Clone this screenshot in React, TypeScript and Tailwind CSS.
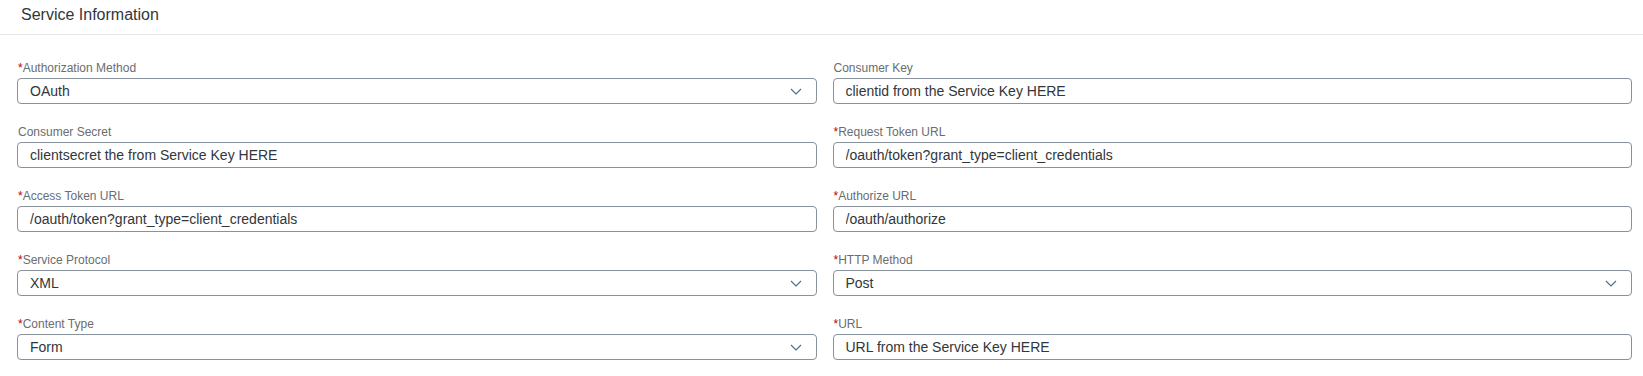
import React from 'react'

type Field = {
  label: string
  value: string
  required?: boolean
  select?: boolean
}

const fields: Field[] = [
  { label: 'Authorization Method', value: 'OAuth', required: true, select: true },
  { label: 'Consumer Key', value: 'clientid from the Service Key HERE' },
  { label: 'Consumer Secret', value: 'clientsecret the from Service Key HERE' },
  { label: 'Request Token URL', value: '/oauth/token?grant_type=client_credentials', required: true },
  { label: 'Access Token URL', value: '/oauth/token?grant_type=client_credentials', required: true },
  { label: 'Authorize URL', value: '/oauth/authorize', required: true },
  { label: 'Service Protocol', value: 'XML', required: true, select: true },
  { label: 'HTTP Method', value: 'Post', required: true, select: true },
  { label: 'Content Type', value: 'Form', required: true, select: true },
  { label: 'URL', value: 'URL from the Service Key HERE', required: true },
]

const Chevron = () => (
  <svg width="12" height="7" viewBox="0 0 12 7" fill="none" className="shrink-0">
    <path d="M1 1l5 5 5-5" stroke="#4a6a8e" strokeWidth="1.1" />
  </svg>
)

const FormField = ({ field }: { field: Field }) => {
  return (
    <div className="flex flex-col">
      <label className="h-4 text-[12px] leading-4 text-[#6a6d70] pl-px">
        {field.required && <span className="text-[#bb0000]">*</span>}
        {field.label}
      </label>
      <div className="mt-[2px] h-[26px] flex items-center justify-between border border-[#89919a] rounded-[4px] bg-white pl-3 pr-[14px]">
        <span className="text-[14px] text-[#32363a] truncate">{field.value}</span>
        {field.select && <Chevron />}
      </div>
    </div>
  )
}

const App = () => {
  return (
    <div className="w-full h-[376px] bg-white font-['Liberation_Sans',Arial,sans-serif]">
      <header className="h-[35px] border-b border-[#e5e5e5] flex items-center pl-[21px]">
        <h2 className="text-[16px] text-[#32363a] pb-[4px]">Service Information</h2>
      </header>
      <div className="grid grid-cols-2 gap-x-4 gap-y-5 pt-[25px] pl-[17px] pr-[11px]">
        {fields.map((f) => (
          <FormField key={f.label} field={f} />
        ))}
      </div>
    </div>
  )
}

export default App
